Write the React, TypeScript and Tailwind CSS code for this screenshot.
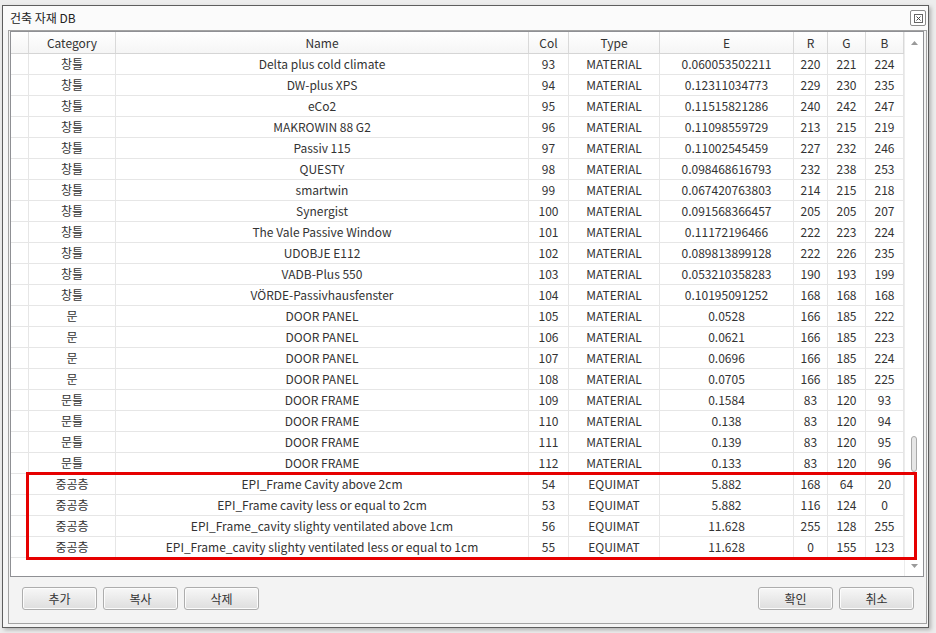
type Row = [string, string, number, string, string, number, number, number];

const rows: Row[] = [
  ["창틀", "Delta plus cold climate", 93, "MATERIAL", "0.060053502211", 220, 221, 224],
  ["창틀", "DW-plus XPS", 94, "MATERIAL", "0.12311034773", 229, 230, 235],
  ["창틀", "eCo2", 95, "MATERIAL", "0.11515821286", 240, 242, 247],
  ["창틀", "MAKROWIN 88 G2", 96, "MATERIAL", "0.11098559729", 213, 215, 219],
  ["창틀", "Passiv 115", 97, "MATERIAL", "0.11002545459", 227, 232, 246],
  ["창틀", "QUESTY", 98, "MATERIAL", "0.098468616793", 232, 238, 253],
  ["창틀", "smartwin", 99, "MATERIAL", "0.067420763803", 214, 215, 218],
  ["창틀", "Synergist", 100, "MATERIAL", "0.091568366457", 205, 205, 207],
  ["창틀", "The Vale Passive Window", 101, "MATERIAL", "0.11172196466", 222, 223, 224],
  ["창틀", "UDOBJE E112", 102, "MATERIAL", "0.089813899128", 222, 226, 235],
  ["창틀", "VADB-Plus 550", 103, "MATERIAL", "0.053210358283", 190, 193, 199],
  ["창틀", "VÖRDE-Passivhausfenster", 104, "MATERIAL", "0.10195091252", 168, 168, 168],
  ["문", "DOOR PANEL", 105, "MATERIAL", "0.0528", 166, 185, 222],
  ["문", "DOOR PANEL", 106, "MATERIAL", "0.0621", 166, 185, 223],
  ["문", "DOOR PANEL", 107, "MATERIAL", "0.0696", 166, 185, 224],
  ["문", "DOOR PANEL", 108, "MATERIAL", "0.0705", 166, 185, 225],
  ["문틀", "DOOR FRAME", 109, "MATERIAL", "0.1584", 83, 120, 93],
  ["문틀", "DOOR FRAME", 110, "MATERIAL", "0.138", 83, 120, 94],
  ["문틀", "DOOR FRAME", 111, "MATERIAL", "0.139", 83, 120, 95],
  ["문틀", "DOOR FRAME", 112, "MATERIAL", "0.133", 83, 120, 96],
];

const marked: Row[] = [
  ["중공층", "EPI_Frame Cavity above 2cm", 54, "EQUIMAT", "5.882", 168, 64, 20],
  ["중공층", "EPI_Frame cavity less or equal to 2cm", 53, "EQUIMAT", "5.882", 116, 124, 0],
  ["중공층", "EPI_Frame_cavity slighty ventilated above 1cm", 56, "EQUIMAT", "11.628", 255, 128, 255],
  ["중공층", "EPI_Frame_cavity slighty ventilated less or equal to 1cm", 55, "EQUIMAT", "11.628", 0, 155, 123],
];

const cols = "grid grid-cols-[18px_87px_413px_40px_91px_134px_34px_38px_38px]";
const headers = ["", "Category", "Name", "Col", "Type", "E", "R", "G", "B"];

function DataRow({ r }: { r: Row }) {
  return (
    <div className={`${cols} h-[21px] border-b border-[#e6e6e6]`}>
      <div className="border-r border-[#e6e6e6]" />
      {r.map((v, i) => (
        <div key={i} className="border-r border-[#e6e6e6] flex items-center justify-center whitespace-nowrap overflow-hidden leading-none">
          {v}
        </div>
      ))}
    </div>
  );
}

function Btn({ label }: { label: string }) {
  return (
    <button className="w-[75px] h-[23px] rounded-[3px] border border-[#adadad] bg-gradient-to-b from-[#f7f7f7] to-[#dedede] text-[12px] text-[#333] leading-none shadow-[inset_0_0_0_1px_#fcfcfc]">
      {label}
    </button>
  );
}

export default function App() {
  return (
    <div className="w-[936px] h-[633px] bg-[#ededed] pt-[5px] pl-[2px] text-[12px] text-[#333] font-['Noto_Sans_CJK_KR',sans-serif]">
      <div className="w-[927px] h-[623px] border border-[#5e5e5e] bg-[#f5f5f5] shadow-[2px_2px_4px_rgba(0,0,0,0.25)] flex flex-col">
        {/* 제목 */}
        <div className="h-[24px] flex items-center pl-[7px] pr-[2px] bg-[#fbfbfb]">
          <span className="text-[12px] text-[#222]">건축 자재 DB</span>
          <div className="ml-auto w-[16px] h-[16px] border border-[#8c8c8c] rounded-[2px] bg-white flex items-center justify-center">
            <svg width="9" height="9" viewBox="0 0 9 9">
              <rect x="0.5" y="0.5" width="8" height="8" fill="none" stroke="#666" strokeWidth="1" />
              <path d="M2.5 2.5 L6.5 6.5 M6.5 2.5 L2.5 6.5" stroke="#444" strokeWidth="1" />
            </svg>
          </div>
        </div>

        {/* 본문 */}
        <div className="flex-1 ml-[5px] mr-[1px] mb-[3px] border border-[#a3a3a3] bg-[#f3f3f3] px-[1px] pb-[12px] flex flex-col">
          <div className="w-[914px] h-[546px] border border-[#8f9094] bg-white flex">
            <div className="w-[893px] flex flex-col">
              <div className={`${cols} h-[22px] border-b border-[#d5d5d5] bg-gradient-to-b from-white to-[#f5f5f5]`}>
                {headers.map((h, i) => (
                  <div key={i} className="border-r border-[#d9d9d9] flex items-center justify-center leading-none">
                    {h}
                  </div>
                ))}
              </div>
              {rows.map((r, i) => (
                <DataRow key={i} r={r} />
              ))}
              <div className="relative">
                {marked.map((r, i) => (
                  <DataRow key={i} r={r} />
                ))}
                <div className="absolute left-[15px] top-[-2px] w-[891px] h-[88px] border-[3px] border-[#e60000] z-10 pointer-events-none" />
              </div>
            </div>
            {/* 스크롤바 */}
            <div className="flex-1 border-l border-[#ececec] flex flex-col items-center">
              <div className="h-[21px] flex items-center justify-center">
                <svg width="7" height="4" viewBox="0 0 7 4">
                  <path d="M0 4 L3.5 0 L7 4 Z" fill="#9a9a9a" />
                </svg>
              </div>
              <div className="mt-[383px] w-[6px] h-[36px] rounded-[3px] border border-[#a9a9a9] bg-[#e6e6e6]" />
              <div className="mt-auto h-[20px] flex items-center justify-center">
                <svg width="7" height="4" viewBox="0 0 7 4">
                  <path d="M0 0 L7 0 L3.5 4 Z" fill="#9a9a9a" />
                </svg>
              </div>
            </div>
          </div>

          <div className="mt-[10px] flex items-center pl-[12px] pr-[11px] gap-[6px]">
            <Btn label="추가" />
            <Btn label="복사" />
            <Btn label="삭제" />
            <div className="flex-1" />
            <Btn label="확인" />
            <Btn label="취소" />
          </div>
        </div>
      </div>
    </div>
  );
}
